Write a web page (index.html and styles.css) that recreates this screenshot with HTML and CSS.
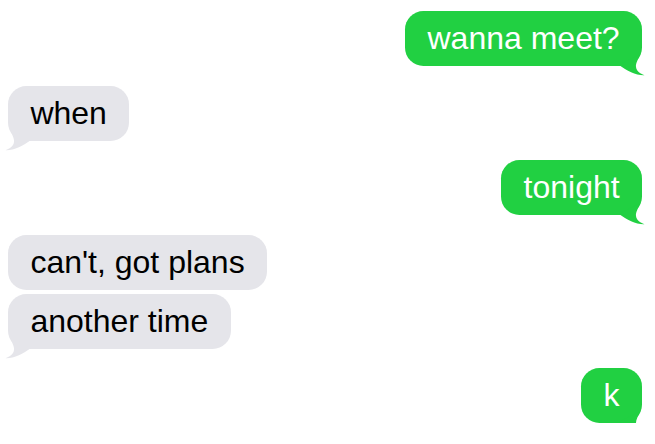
FILE: index.html
```html
<!DOCTYPE html>
<html lang="en">
<head>
<meta charset="utf-8">
<title>Messages</title>
<link rel="stylesheet" href="styles.css">
</head>
<body>
<div class="chat">
  <p class="msg me">wanna meet?<svg class="tail" viewBox="-26 -14 30 25" width="30" height="25"><path d="M -2 -12 C -3.5 -7, -6.5 -3, -6 1 C -5.5 5, -2 7.5, 2.5 9.3 C -6 9.6, -15 5, -23 -1 Z"/></svg></p>
  <p class="msg them">when<svg class="tail" viewBox="-26 -14 30 25" width="30" height="25"><path d="M -2 -12 C -3.5 -7, -6.5 -3, -6 1 C -5.5 5, -2 7.5, 2.5 9.3 C -6 9.6, -15 5, -23 -1 Z"/></svg></p>
  <p class="msg me">tonight<svg class="tail" viewBox="-26 -14 30 25" width="30" height="25"><path d="M -2 -12 C -3.5 -7, -6.5 -3, -6 1 C -5.5 5, -2 7.5, 2.5 9.3 C -6 9.6, -15 5, -23 -1 Z"/></svg></p>
  <p class="msg them">can't, got plans</p>
  <p class="msg them">another time<svg class="tail" viewBox="-26 -14 30 25" width="30" height="25"><path d="M -2 -12 C -3.5 -7, -6.5 -3, -6 1 C -5.5 5, -2 7.5, 2.5 9.3 C -6 9.6, -15 5, -23 -1 Z"/></svg></p>
  <p class="msg me">k<svg class="tail" viewBox="-26 -14 30 25" width="30" height="25"><path d="M -2 -12 C -3.5 -7, -6.5 -3, -6 1 C -5.5 5, -2 7.5, 2.5 9.3 C -6 9.6, -15 5, -23 -1 Z"/></svg></p>
</div>
</body>
</html>
```

FILE: styles.css
```css
html, body {
  margin: 0;
  padding: 0;
  background: #ffffff;
}

.chat {
  display: flex;
  flex-direction: column;
  padding: 11px 13px 0 8px;
  font-family: "Liberation Sans", Arial, sans-serif;
  font-size: 32px;
}

.msg {
  position: relative;
  margin: 0;
  padding: 8px 22.4px;
  line-height: 39px;
  border-radius: 18.4px;
  white-space: nowrap;
  width: fit-content;
}

.msg + .msg {
  margin-top: 19.5px;
}

.them + .them {
  margin-top: 4px;
}

.me {
  align-self: flex-end;
  background: #21d042;
  color: #ffffff;
}

.them {
  align-self: flex-start;
  background: #e5e5ea;
  color: #000000;
}

.tail {
  position: absolute;
  bottom: -11px;
  display: block;
}

.me .tail {
  right: -4px;
  fill: #21d042;
}

.them .tail {
  left: -4px;
  fill: #e5e5ea;
  transform: scaleX(-1);
}
```
